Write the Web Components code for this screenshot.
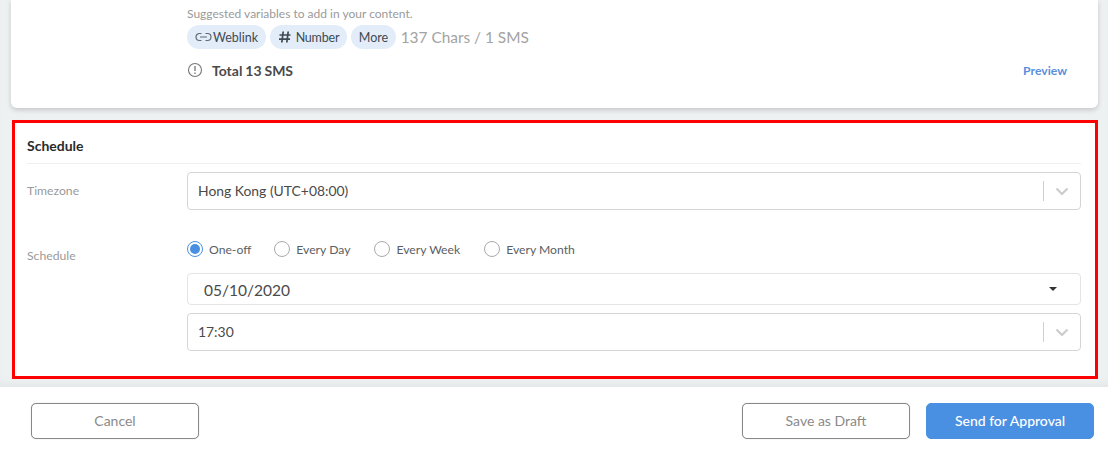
<!DOCTYPE html>
<html><head><meta charset="utf-8"><style>
html,body{margin:0;padding:0;background:#fff}
body{width:1108px;height:450px;overflow:hidden;font-family:Lato,"Liberation Sans",sans-serif;display:flex;flex-direction:column}
</style></head><body>
<sms-page>
  <content-card></content-card>
  <schedule-section></schedule-section>
</sms-page>
<footer-bar></footer-bar>
<script>
function def(name,html){
  customElements.define(name,class extends HTMLElement{
    constructor(){super();this.attachShadow({mode:'open'}).innerHTML=html;}
  });
}
const CHEV='<svg width="14" height="9" viewBox="0 0 14 9"><path d="M1.5 1.5 7 7l5.500-5.500" fill="none" stroke="#ccc" stroke-width="2.200"/></svg>';
def('sms-page',`<style>:host{display:flex;flex-direction:column;height:387px;flex:none;background:#eef1f2;padding:0 10px 0 11px;box-sizing:border-box;box-shadow:inset 0 -8px 8px -6px #dfe3e4}</style><slot></slot>`);
def('var-chip',`<style>:host{display:inline-flex;align-items:center;height:24px;border-radius:12px;background:#e3edfa;padding:0 8px;font-size:12.500px;color:#3f4a52}</style><slot></slot>`);
def('content-card',`<style>
:host{display:flex;flex-direction:column;height:108px;box-sizing:border-box;background:#fff;border-radius:0 0 6px 6px;box-shadow:0 2px 5px rgba(0,0,0,.18);padding:7px 30px 0 176px;flex:none}
.hint{font-size:12px;line-height:13px;color:#9a9a9a}
.chips{display:flex;align-items:center;gap:3.500px;margin-top:5px}
.count{font-size:15.400px;color:#a3a3a3;margin-left:1px}
.total{display:flex;align-items:center;margin-top:10px;height:22px}
.t{font-size:14px;font-weight:700;color:#4a4a4a;margin-left:9px;word-spacing:-.5px}
.p{margin-left:auto;font-size:12.200px;font-weight:700;color:#5b8fdc;margin-right:1px}
.n{margin-left:4px;letter-spacing:-.2px}
</style>
<div class="hint">Suggested variables to add in your content.</div>
<div class="chips">
<var-chip><svg width="17" height="10" viewBox="0 0 17 10" style="margin-right:1px"><path d="M6.500 1.500H4.500a3.500 3.500 0 0 0 0 7h2M10.500 1.500h2a3.500 3.500 0 0 1 0 7h-2M5 5h7" fill="none" stroke="#5f6b73" stroke-width="1.200"/></svg>Weblink</var-chip>
<var-chip><svg width="14" height="14" viewBox="0 0 14 14"><path d="M5.200 1.500 3.800 12.500M10.200 1.500 8.800 12.500M1.500 5h11M1 9.200h11" fill="none" stroke="#3f4a52" stroke-width="1.700"/></svg><span class="n">Number</span></var-chip>
<var-chip>More</var-chip>
<span class="count">137 Chars / 1 SMS</span>
</div>
<div class="total"><svg width="16" height="16" viewBox="0 0 16 16"><circle cx="8" cy="8" r="6.500" fill="none" stroke="#777" stroke-width="1.100"/><path d="M8 4v5M8 10.500v1.500" stroke="#777" stroke-width="1.300" fill="none"/></svg><span class="t">Total 13 SMS</span><span class="p">Preview</span></div>`);
def('select-box',`<style>
:host{display:flex;align-items:center;height:38px;box-sizing:border-box;border:1px solid #d5d5d5;border-radius:4px;padding-left:10px;font-size:13.900px;color:#4a4a4a;background:#fff}
.txt{padding-bottom:2px}
.s{margin-left:auto;width:1px;height:20px;background:#d0d0d0}
.c{width:36px;display:flex;justify-content:center}
</style><span class="txt"><slot></slot></span><span class="s"></span><span class="c">${CHEV}</span>`);
def('date-box',`<style>
:host{display:flex;align-items:center;height:32px;box-sizing:border-box;border:1px solid #e4e4e4;border-radius:4px;padding:2px 23px 0 16px;font-size:15.500px;color:#4a4a4a;background:#fff;justify-content:space-between}
.a{width:0;height:0;border:4px solid transparent;border-top:4px solid #333;border-bottom:0;margin-top:-2px}
</style><slot></slot><span class="a"></span>`);
def('radio-opt',`<style>
:host{display:inline-flex;align-items:center;font-size:12.200px;color:#5a5f66;gap:6px}
.r{width:14px;height:14px;border:1px solid #aaa;border-radius:50%;box-sizing:content-box;display:flex;align-items:center;justify-content:center}
:host([on]) .r{border-color:#4a90e2}
:host([on]) .r::after{content:"";width:10px;height:10px;border-radius:50%;background:#4a90e2}
</style><span class="r"></span><slot></slot>`);
def('schedule-section',`<style>
:host{display:block;height:259px;box-sizing:border-box;margin:12px 0 0 1px;border:3px solid #f00;background:#fff;padding:0 14px 0 12px;flex:none}
h2{margin:0;font-size:14px;font-weight:700;color:#2b2b2b;height:40px;line-height:46px;border-bottom:1px solid #edf1f2;box-sizing:content-box}
.grid{display:grid;grid-template-columns:160px 1fr;}
.l{font-size:12.200px;color:#9a9a9a}
.l1{padding-top:19px}
.tz{margin-top:8px}
.l2{padding-top:38px}
.radios{display:flex;gap:23px;margin-top:30px;height:18px;align-items:center}
.wk{margin:0 1px}
date-box{margin-top:15px}
select-box.t{margin-top:8px}
</style>
<h2>Schedule</h2>
<div class="grid">
<div class="l l1">Timezone</div><select-box class="tz">Hong Kong (UTC+08:00)</select-box>
<div class="l l2">Schedule</div>
<div><div class="radios"><radio-opt on>One-off</radio-opt><radio-opt>Every Day</radio-opt><radio-opt class="wk">Every Week</radio-opt><radio-opt>Every Month</radio-opt></div>
<date-box>05/10/2020</date-box><select-box class="t">17:30</select-box></div>
</div>`);
def('ui-btn',`<style>
:host{display:flex;align-items:center;justify-content:center;width:168px;height:36px;box-sizing:border-box;border:1px solid #888;border-radius:5px;font-size:14px;color:#8a8a8a;background:#fff;padding-bottom:2px;box-shadow:0 0 1px rgba(0,0,0,.3)}
:host([primary]){background:#4a90e2;border-color:#4a90e2;color:#fff;font-weight:500;box-shadow:none}
</style><slot></slot>`);
def('footer-bar',`<style>
:host{display:flex;gap:16px;padding:16px 14px 0 31px;flex:none;height:63px;box-sizing:border-box;background:#fff}
.sp{flex:1}
</style><ui-btn>Cancel</ui-btn><span class="sp"></span><ui-btn>Save as Draft</ui-btn><ui-btn primary>Send for Approval</ui-btn>`);
</script>
</body></html>
